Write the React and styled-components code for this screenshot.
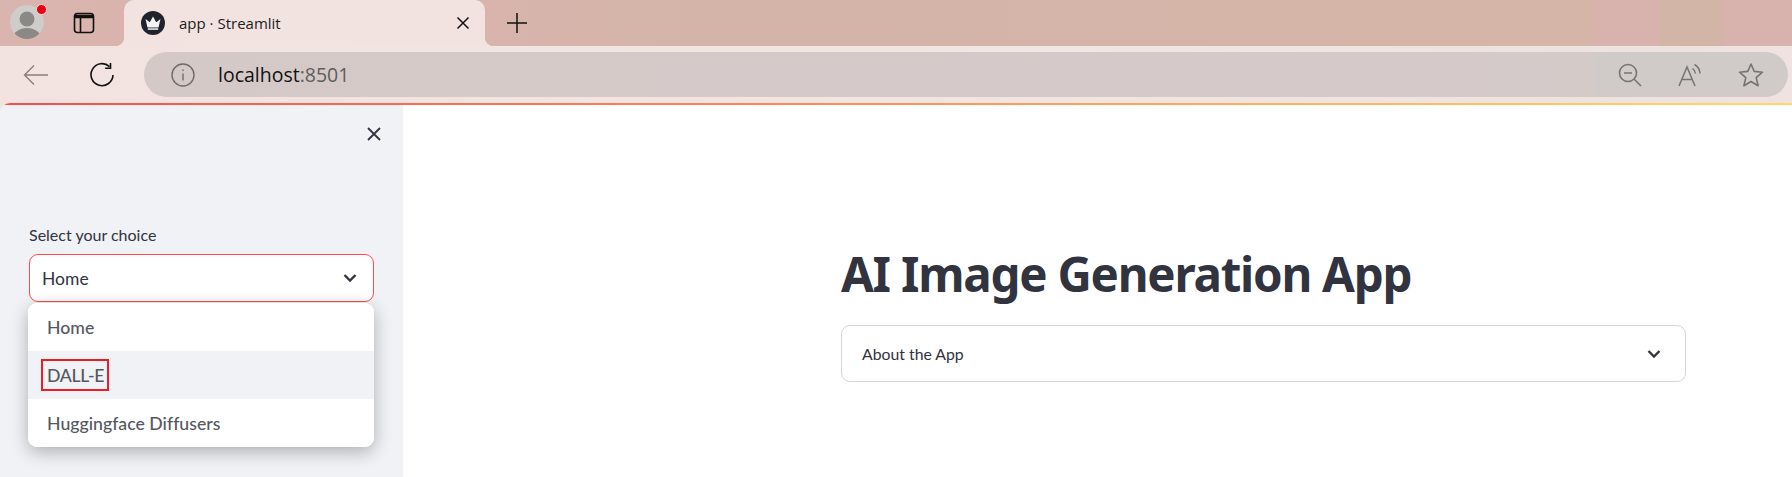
import styled, { createGlobalStyle } from "styled-components";

const GlobalStyle = createGlobalStyle`
  html, body {
    margin: 0;
    padding: 0;
    height: 100%;
    overflow: hidden;
    background: #ffffff;
  }
  * {
    box-sizing: border-box;
  }
`;

const CHROME_FONT = `"Open Sans", "Noto Sans", sans-serif`;
const PAGE_FONT = `"Lato", "Noto Sans", sans-serif`;

const Browser = styled.div`
  width: 1792px;
  height: 477px;
  display: flex;
  flex-direction: column;
  overflow: hidden;
  background: linear-gradient(90deg, #f2e3e1 0%, #f1e5e1 60%, #eee3de 85%, #efe2e0 100%);
`;

// Tab strip
const TabStrip = styled.div`
  height: 46px;
  flex: none;
  display: flex;
  align-items: flex-start;
  background: linear-gradient(
    90deg,
    #dab4ae 0,
    #d8b4ac 480px,
    #d4b4a8 700px,
    #d4b5a8 1594px,
    #d8b2ac 1594px,
    #d8b2ac 1660px,
    #d3b5a8 1660px,
    #d3b5a8 1722px,
    #d8b2ac 1722px
  );
`;

const Avatar = styled.div`
  position: relative;
  width: 34px;
  height: 34px;
  margin: 5px 0 0 10px;
`;

const NotifyDot = styled.span`
  position: absolute;
  top: -1px;
  right: -3px;
  width: 11px;
  height: 11px;
  border-radius: 50%;
  border: 1px solid #f1dcd8;
  background: #e60012;
`;

const StripIcon = styled.div`
  width: ${(p) => p.$width}px;
  height: 46px;
  margin-left: ${(p) => p.$left}px;
  display: flex;
  align-items: center;
  justify-content: center;
  flex: none;
`;

const Tab = styled.div`
  position: relative;
  width: 361px;
  height: 46px;
  margin-left: 28px;
  padding: 0 15px 0 17px;
  display: flex;
  align-items: center;
  background: #f2e3e1;
  border-radius: 10px 10px 0 0;

  &::before,
  &::after {
    content: "";
    position: absolute;
    bottom: 0;
    width: 9px;
    height: 9px;
  }
  &::before {
    left: -9px;
    background: radial-gradient(circle at 0 0, transparent 9px, #f2e3e1 9.5px);
  }
  &::after {
    right: -9px;
    background: radial-gradient(circle at 100% 0, transparent 9px, #f2e3e1 9.5px);
  }
`;

const TabTitle = styled.span`
  flex: 1;
  margin-left: 14px;
  font-family: ${CHROME_FONT};
  font-size: 15px;
  color: #1c1c1c;
  white-space: nowrap;
`;

// Address toolbar
const Toolbar = styled.div`
  height: 57px;
  flex: none;
  display: flex;
  align-items: center;
  padding: 0 4px 0 0;
`;

const ToolbarButton = styled.div`
  width: ${(p) => p.$width}px;
  flex: none;
  display: flex;
  align-items: center;
  justify-content: center;
`;

const AddressBar = styled.div`
  flex: 1;
  height: 45px;
  margin-left: 12px;
  padding: 0 24px 0 27px;
  display: flex;
  align-items: center;
  border-radius: 23px;
  background: linear-gradient(
    90deg,
    #d5c9c8 0,
    #d5c9c9 1240px,
    #d4cbc9 1450px,
    #d0cbc8 1450px
  );
`;

const Url = styled.div`
  flex: 1;
  margin-left: 23px;
  font-family: ${CHROME_FONT};
  font-size: 19.5px;
  color: #111111;
`;

const Port = styled.span`
  color: #5d5d5d;
`;

const BarIcons = styled.div`
  display: flex;
  align-items: center;
  gap: 36px;
`;

// Streamlit page
const Page = styled.div`
  flex: 1;
  min-height: 0;
  display: flex;
  flex-direction: column;
  background: #ffffff;
  border-radius: 10px 0 0 0;
  overflow: hidden;
`;

const Decoration = styled.div`
  height: 2px;
  flex: none;
  background: linear-gradient(90deg, #ff4b4b, #ffd868);
`;

const Content = styled.div`
  flex: 1;
  display: flex;
  min-height: 0;
  font-variant-ligatures: none;
`;

const Sidebar = styled.aside`
  width: 403px;
  flex: none;
  padding: 21px 21px 0 29px;
  background: #f0f2f6;
  font-family: ${PAGE_FONT};
`;

const CloseRow = styled.div`
  height: 20px;
  display: flex;
  justify-content: flex-end;
`;

const SelectLabel = styled.div`
  margin-top: 79px;
  height: 29px;
  font-size: 16px;
  line-height: 20px;
  color: #31333f;
`;

const SelectWrap = styled.div`
  position: relative;
  width: 345px;
`;

const SelectBox = styled.div`
  height: 48px;
  padding: 0 13px 0 12px;
  display: flex;
  align-items: center;
  justify-content: space-between;
  background: #ffffff;
  border: 1px solid #ff4b4b;
  border-radius: 9px;
  font-size: 17.5px;
  color: #31333f;
`;

const Menu = styled.ul`
  position: absolute;
  top: 49px;
  left: -1px;
  width: 346px;
  margin: 0;
  padding: 0;
  list-style: none;
  background: #ffffff;
  border-radius: 9px;
  overflow: hidden;
  box-shadow: 0 5px 18px rgba(0, 0, 0, 0.28);
`;

const MenuItem = styled.li`
  height: 48px;
  padding-left: 19px;
  display: flex;
  align-items: center;
  font-size: 17.7px;
  font-weight: 500;
  color: #555761;
  background: ${(p) => (p.$active ? "#f0f2f6" : "#ffffff")};
`;

const Marked = styled.span`
  margin-left: -6px;
  padding: 0 3px 0 4px;
  height: 32px;
  display: flex;
  align-items: center;
  border: 2px solid #ee1c25;
  letter-spacing: -0.3px;
`;

const Main = styled.main`
  flex: 1;
  padding: 136px 106px 0 438px;
  font-family: ${PAGE_FONT};
`;

const Title = styled.h1`
  margin: 0;
  height: 84px;
  font-family: "Noto Sans", sans-serif;
  font-size: 47.5px;
  line-height: 66px;
  font-weight: 700;
  letter-spacing: -1.25px;
  color: #31333f;
  white-space: nowrap;
`;

const Expander = styled.div`
  height: 57px;
  padding: 0 21px 0 20px;
  display: flex;
  align-items: center;
  justify-content: space-between;
  border: 1px solid #d6d6d9;
  border-radius: 9px;
  font-size: 15.8px;
  color: #31333f;
`;

const Chevron = () => (
  <svg width="20" height="20" viewBox="0 0 20 20" fill="none" stroke="#31333f" strokeWidth="2.3">
    <path d="M4.5 7 10 12.5 15.5 7" />
  </svg>
);

export default function App() {
  return (
    <>
      <GlobalStyle />
      <Browser>
        <TabStrip>
          <Avatar>
            <svg width="34" height="34" viewBox="0 0 34 34">
              <defs>
                <clipPath id="face">
                  <circle cx="17" cy="17" r="17" />
                </clipPath>
              </defs>
              <circle cx="17" cy="17" r="17" fill="#cfcdca" />
              <g clipPath="url(#face)" fill="#8b8986">
                <circle cx="17" cy="14" r="7.5" />
                <ellipse cx="17" cy="33" rx="14" ry="10" />
              </g>
            </svg>
            <NotifyDot />
          </Avatar>
          <StripIcon $width="24" $left="28">
            <svg width="22" height="22" viewBox="0 0 22 22" fill="none" stroke="#111" strokeWidth="1.6">
              <rect x="1.5" y="1.5" width="19" height="19" rx="3" />
              <path d="M1.5 4.5h19" strokeWidth="3.5" />
              <path d="M7.5 5.5v15" />
            </svg>
          </StripIcon>
          <Tab>
            <svg width="24" height="24" viewBox="0 0 24 24">
              <circle cx="12" cy="12" r="12" fill="#20232d" />
              <path d="M4.5 8 8.8 11.2 12 5.5 15.2 11.2 19.5 8 17.5 16.5H6.5Z" fill="#f4f4f4" />
              <path d="M6.8 17.3h10.4v1.5H6.8z" fill="#f4f4f4" />
            </svg>
            <TabTitle>app · Streamlit</TabTitle>
            <svg width="14" height="14" viewBox="0 0 14 14" stroke="#111" strokeWidth="1.5">
              <path d="M1.5 1.5 12.5 12.5M12.5 1.5 1.5 12.5" />
            </svg>
          </Tab>
          <StripIcon $width="22" $left="21">
            <svg width="22" height="22" viewBox="0 0 22 22" stroke="#111" strokeWidth="1.5">
              <path d="M11 1v20M1 11h20" />
            </svg>
          </StripIcon>
        </TabStrip>

        <Toolbar>
          <ToolbarButton $width="72">
            <svg width="26" height="22" viewBox="0 0 26 22" fill="none" stroke="#8a7f7d" strokeWidth="1.4">
              <path d="M25 11H2M11 1.5 1.5 11l9.5 9.5" />
            </svg>
          </ToolbarButton>
          <ToolbarButton $width="60">
            <svg width="26" height="26" viewBox="0 0 26 26" fill="none" stroke="#111" strokeWidth="1.6">
              <path d="M20.5 4.6A11 11 0 1 0 24 13" />
              <path d="M21.5 1v5.2h-5.4" />
            </svg>
          </ToolbarButton>
          <AddressBar>
            <svg width="24" height="24" viewBox="0 0 24 24" fill="none" stroke="#6f6b6a" strokeWidth="1.4">
              <circle cx="12" cy="12" r="11" />
              <path d="M12 10.5v7M12 6.5v1.6" />
            </svg>
            <Url>
              localhost<Port>:8501</Port>
            </Url>
            <BarIcons>
              <svg width="24" height="24" viewBox="0 0 24 24" fill="none" stroke="#767472" strokeWidth="1.6">
                <circle cx="10" cy="10" r="8.5" />
                <path d="M6 10h8M16 16l7 7" />
              </svg>
              <svg width="24" height="24" viewBox="0 0 24 24" fill="none" stroke="#767472" strokeWidth="1.5">
                <path d="M1 23 9 4l8 19M4 16.5h10" />
                <path d="M14.5 5.5a7 7 0 0 1 3 5M16.5 1.5a11 11 0 0 1 5.5 9" />
              </svg>
              <svg width="26" height="26" viewBox="0 0 26 26" fill="none" stroke="#767472" strokeWidth="1.6" strokeLinejoin="round">
                <path d="M13 2 16.2 9.4 24.5 10.2 18.2 15.6 20.1 23.8 13 19.5 5.9 23.8 7.8 15.6 1.5 10.2 9.8 9.4Z" />
              </svg>
            </BarIcons>
          </AddressBar>
        </Toolbar>

        <Page>
          <Decoration />
          <Content>
            <Sidebar>
              <CloseRow>
                <svg width="16" height="16" viewBox="0 0 16 16" stroke="#31333f" strokeWidth="1.8">
                  <path d="M2 2 14 14M14 2 2 14" />
                </svg>
              </CloseRow>
              <SelectLabel>Select your choice</SelectLabel>
              <SelectWrap>
                <SelectBox>
                  Home
                  <Chevron />
                </SelectBox>
                <Menu>
                  <MenuItem>Home</MenuItem>
                  <MenuItem $active>
                    <Marked>DALL-E</Marked>
                  </MenuItem>
                  <MenuItem>Huggingface Diffusers</MenuItem>
                </Menu>
              </SelectWrap>
            </Sidebar>
            <Main>
              <Title>AI Image Generation App</Title>
              <Expander>
                About the App
                <Chevron />
              </Expander>
            </Main>
          </Content>
        </Page>
      </Browser>
    </>
  );
}
